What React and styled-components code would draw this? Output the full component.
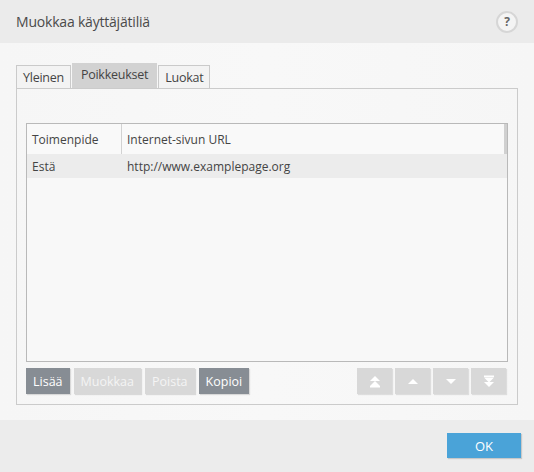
import React from "react";
import styled, { createGlobalStyle } from "styled-components";

const Global = createGlobalStyle`
  html, body { margin: 0; padding: 0; }
  body { width: 534px; height: 472px; overflow: hidden; font-family: "Open Sans", "Noto Sans", sans-serif; }
  * { box-sizing: border-box; }
`;

const Window = styled.div`
  width: 534px;
  height: 472px;
  display: flex;
  flex-direction: column;
  background: #f5f5f5;
`;

const TitleBar = styled.div`
  height: 43px;
  background: #ebebeb;
  display: flex;
  align-items: center;
  justify-content: space-between;
  padding: 0 16px 0 16px;
`;

const Title = styled.div`
  font-size: 14px;
  color: #4a4a4a;
  letter-spacing: -0.2px;
`;

const HelpIcon = styled.div`
  width: 22px;
  height: 22px;
  border-radius: 50%;
  border: 2px solid #d6d6d6;
  background: #f4f4f4;
  color: #666;
  font-size: 12px;
  font-weight: 700;
  display: flex;
  align-items: center;
  justify-content: center;
  line-height: 1;
`;

const Body = styled.div`
  flex: 1;
  padding: 20px 16px 15px 16px;
  background: linear-gradient(90deg, #f6f6f6, #f8f8f8 50%, #f6f6f6);
  display: flex;
  flex-direction: column;
`;

const Tabs = styled.div`
  display: flex;
  align-items: flex-end;
  height: 25px;
`;

const Tab = styled.div`
  height: ${p => (p.$active ? "25px" : "23px")};
  padding: 0 ${p => (p.$active ? "8px" : "6px")};
  display: flex;
  align-items: ${p => (p.$active ? "flex-start" : "center")};
  padding-top: ${p => (p.$active ? "2px" : "1px")};
  font-size: 12.5px;
  letter-spacing: -0.25px;
  color: #444;
  background: ${p => (p.$active ? "#d2d2d2" : "#f3f3f3")};
  border: 1px solid ${p => (p.$active ? "#d2d2d2" : "#cacaca")};
  border-bottom: none;
  margin-left: ${p => (p.$first ? "0" : "1px")};
`;

const Panel = styled.div`
  flex: 1;
  border: 1px solid #cbcbcb;
  padding: 34px 9px 10px 9px;
  display: flex;
  flex-direction: column;
`;

const Table = styled.div`
  flex: 1;
  border: 1px solid #b9b9b9;
  background: #f8f8f8;
  display: flex;
  flex-direction: column;
`;

const HeaderRow = styled.div`
  display: grid;
  grid-template-columns: 95px 1fr 3px;
  height: 30px;
  background: #f9f9f9;
`;

const HeaderCell = styled.div`
  font-size: 12px;
  color: #444;
  display: flex;
  align-items: center;
  padding-left: 5px;
  border-right: ${p => (p.$divider ? "1px solid #d2d2d2" : "none")};
`;

const HeaderEnd = styled.div`
  background: #d0d0d0;
`;

const DataRow = styled.div`
  display: grid;
  grid-template-columns: 95px 1fr;
  height: 24px;
  background: #ececec;
`;

const Cell = styled.div`
  font-size: 12px;
  color: #444;
  display: flex;
  align-items: center;
  padding-left: 5px;
`;

const Toolbar = styled.div`
  display: flex;
  justify-content: space-between;
  margin-top: 6px;
`;

const Group = styled.div`
  display: flex;
  gap: ${p => p.$gap || 4}px;
  margin-right: ${p => p.$right || 0}px;
`;

const ActionButton = styled.div`
  height: 26px;
  padding: 0 7px;
  display: flex;
  align-items: center;
  font-size: 12.5px;
  color: ${p => (p.$enabled ? "#ffffff" : "#f4f4f4")};
  background: ${p => (p.$enabled ? "#878d94" : "#d8d8d8")};
  box-shadow: 1px 1px 1px rgba(0, 0, 0, 0.12);
`;

const ArrowButton = styled.div`
  width: 35px;
  height: 26px;
  background: #d8d8d8;
  display: flex;
  align-items: center;
  justify-content: center;
  box-shadow: 1px 1px 1px rgba(0, 0, 0, 0.1);
`;

const Footer = styled.div`
  height: 52px;
  background: #ececec;
  display: flex;
  align-items: center;
  justify-content: flex-end;
  padding: 0 13px 1px 0;
`;

const OkButton = styled.div`
  width: 74px;
  height: 25px;
  background: #4aa3d8;
  color: #fff;
  font-size: 13px;
  display: flex;
  align-items: center;
  justify-content: center;
  box-shadow: 1px 1px 1px rgba(0, 0, 0, 0.15);
`;

const Arrow = ({ dir, double }) => {
  const up = dir === "up";
  const tri = (y) =>
    up ? `M2 ${y + 5} L7 ${y} L12 ${y + 5} Z` : `M2 ${y} L7 ${y + 5} L12 ${y} Z`;
  return (
    <svg width="14" height="13" viewBox="0 0 14 13">
      {double ? (
        up ? (
          <>
            <path d={tri(1)} fill="#fff" />
            <path d={tri(6)} fill="#fff" />
            <rect x="2" y="11" width="10" height="1.5" fill="#fff" />
          </>
        ) : (
          <>
            <rect x="2" y="0.5" width="10" height="1.5" fill="#fff" />
            <path d={tri(2.5)} fill="#fff" />
            <path d={tri(7)} fill="#fff" />
          </>
        )
      ) : (
        <path d={tri(4)} fill="#fff" />
      )}
    </svg>
  );
};

export default function App() {
  return (
    <Window>
      <Global />
      <TitleBar>
        <Title>Muokkaa käyttäjätiliä</Title>
        <HelpIcon>?</HelpIcon>
      </TitleBar>
      <Body>
        <Tabs>
          <Tab $first>Yleinen</Tab>
          <Tab $active>Poikkeukset</Tab>
          <Tab>Luokat</Tab>
        </Tabs>
        <Panel>
          <Table>
            <HeaderRow>
              <HeaderCell $divider>Toimenpide</HeaderCell>
              <HeaderCell>Internet-sivun URL</HeaderCell>
              <HeaderEnd />
            </HeaderRow>
            <DataRow>
              <Cell>Estä</Cell>
              <Cell>http://www.examplepage.org</Cell>
            </DataRow>
          </Table>
          <Toolbar>
            <Group>
              <ActionButton $enabled>Lisää</ActionButton>
              <ActionButton>Muokkaa</ActionButton>
              <ActionButton>Poista</ActionButton>
              <ActionButton $enabled>Kopioi</ActionButton>
            </Group>
            <Group $gap={3} $right={2}>
              <ArrowButton><Arrow dir="up" double /></ArrowButton>
              <ArrowButton><Arrow dir="up" /></ArrowButton>
              <ArrowButton><Arrow dir="down" /></ArrowButton>
              <ArrowButton><Arrow dir="down" double /></ArrowButton>
            </Group>
          </Toolbar>
        </Panel>
      </Body>
      <Footer>
        <OkButton>OK</OkButton>
      </Footer>
    </Window>
  );
}
